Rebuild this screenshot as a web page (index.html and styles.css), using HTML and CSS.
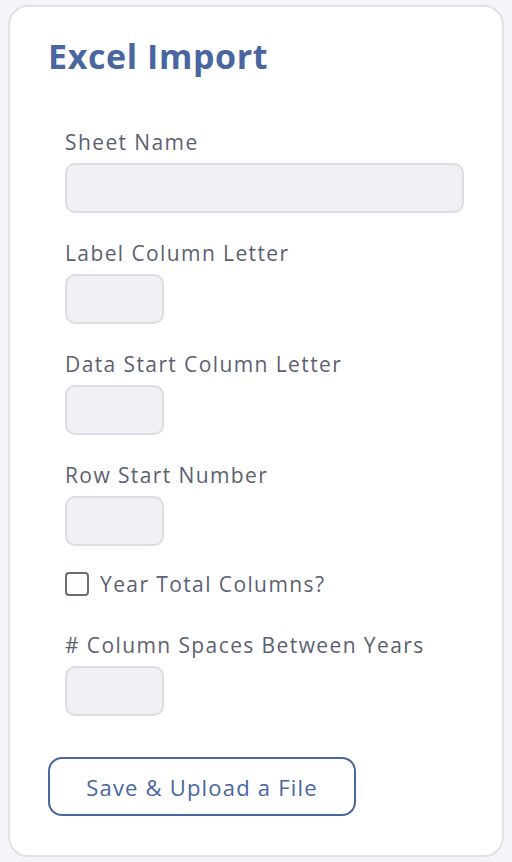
FILE: index.html
```html
<!DOCTYPE html>
<html lang="en">
<head>
    <meta charset="UTF-8">
    <meta name="viewport" content="width=device-width, initial-scale=1.0">
    <link rel="stylesheet" href="styles.css">
</head>
<body>
    <div class="card">
        <h1 class="title">Excel Import</h1>

        <form class="import-form">
            <div class="field">
                <label class="field-label">Sheet Name</label>
                <input class="input input-wide" type="text">
            </div>
            <div class="field">
                <label class="field-label">Label Column Letter</label>
                <input class="input input-small" type="text">
            </div>
            <div class="field">
                <label class="field-label">Data Start Column Letter</label>
                <input class="input input-small" type="text">
            </div>
            <div class="field">
                <label class="field-label">Row Start Number</label>
                <input class="input input-small" type="text">
            </div>
            <label class="check-row">
                <span class="checkbox"></span>
                Year Total Columns?
            </label>
            <div class="field">
                <label class="field-label"># Column Spaces Between Years</label>
                <input class="input input-small" type="text">
            </div>
        </form>

        <button class="upload-btn" type="button">Save &amp; Upload a File</button>
    </div>
</body>
</html>
```

FILE: styles.css
```css
body {
    margin: 0;
    background-color: #f4f4f9;
    font-family: "Open Sans", Lato, sans-serif;
}

.card {
    margin: 5px 8px 5px 8px;
    height: 852px;
    box-sizing: border-box;
    background-color: #fff;
    border: 2px solid #e1e1ea;
    border-radius: 20px;
    padding: 0 38px;
}

.title {
    margin: 29px 0 0 0;
    font-size: 34px;
    line-height: 40px;
    font-weight: 700;
    letter-spacing: 0.6px;
    color: #4a66a0;
}

.import-form {
    padding-left: 17px;
    margin-top: 54px;
}

.field {
    display: flex;
    flex-direction: column;
    align-items: flex-start;
    margin-bottom: 28px;
}

.field-label {
    font-size: 21px;
    line-height: 24px;
    letter-spacing: 1.4px;
    color: #5c6172;
    margin-bottom: 9px;
}

.input {
    height: 50px;
    box-sizing: border-box;
    background-color: #f0f1f5;
    border: 2px solid #dcdde4;
    border-radius: 10px;
}

.input-wide {
    width: 399px;
}

.input-small {
    width: 99px;
}

.check-row {
    display: flex;
    align-items: center;
    gap: 11px;
    font-size: 21px;
    line-height: 24px;
    letter-spacing: 1.4px;
    color: #5c6172;
    margin: -2px 0 37px 0;
}

.checkbox {
    width: 20px;
    height: 20px;
    border: 2px solid #6a6e78;
    border-radius: 4px;
}

.upload-btn {
    margin-top: 13px;
    margin-left: 0;
    width: 308px;
    height: 59px;
    background: #fff;
    border: 2px solid #4a66a0;
    border-radius: 14px;
    font-family: inherit;
    font-size: 22px;
    letter-spacing: 1.2px;
    color: #4a66a0;
}
```
